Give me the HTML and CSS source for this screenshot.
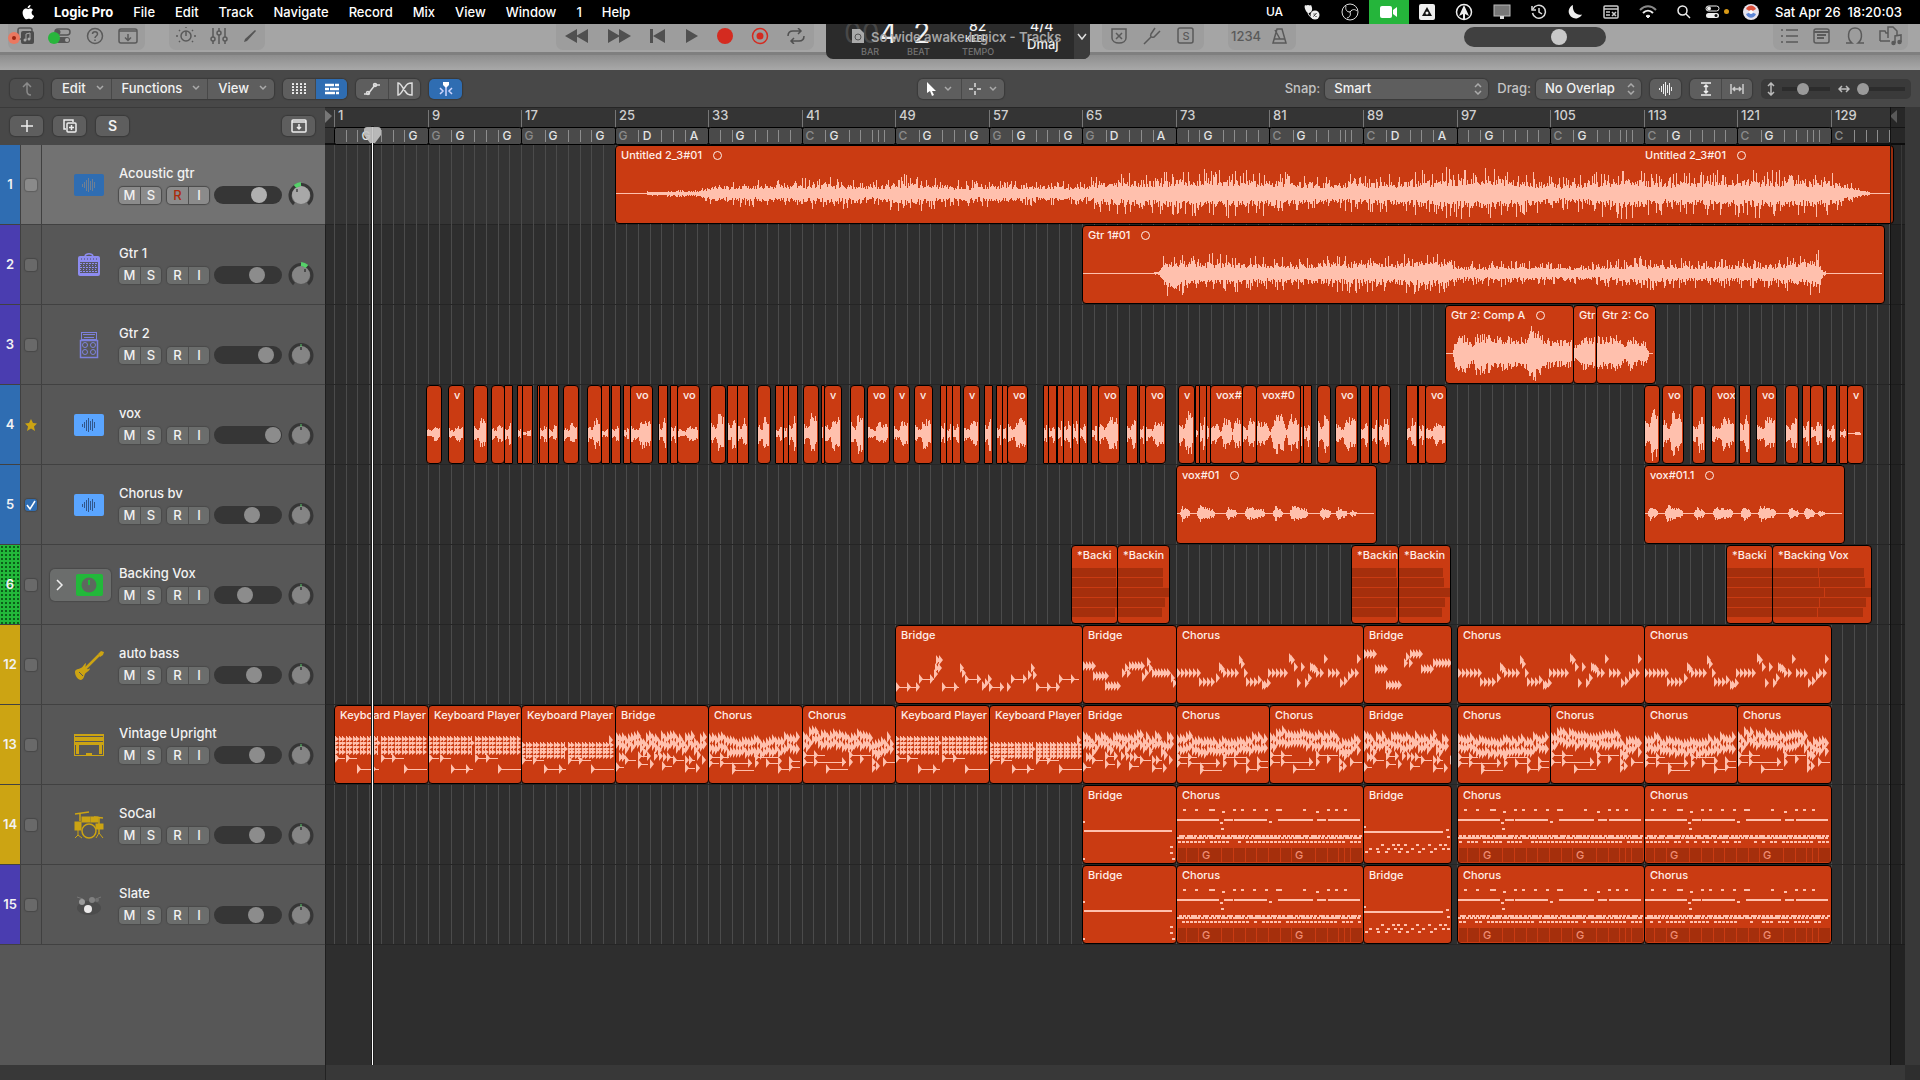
FILE: index.html
```html
<!DOCTYPE html>
<html lang="en">

<head>
    <meta charset="UTF-8">
    <meta name="viewport" content="width=device-width, initial-scale=1.0">
    <title>So wide awake.logicx - Tracks</title>
    <link rel="stylesheet" href="styles.css">
</head>

<body>
    <!-- system menu -->
    <header class="menubar">
        <nav class="menus">
            <svg class="apple" width="14" height="16" viewBox="0 0 14 16"><path d="M11.6 8.4c0-1.6 1.2-2.4 1.4-2.5-.8-1.1-2-1.300-2.400-1.300-1-.1-2 .6-2.500.6S6.800 4.600 6 4.600C4.900 4.600 3.800 5.300 3.200 6.300c-1.300 2.200-.3 5.500.9 7.200.6.900 1.400 1.800 2.300 1.800s1.300-.6 2.400-.6 1.400.6 2.400.6 1.600-.9 2.200-1.700c.4-.6.6-1.100.8-1.700-1.600-.7-2.600-1.800-2.600-3.500zM9.800 3.300c.5-.6.8-1.500.7-2.400-.7 0-1.600.5-2.100 1.100-.5.500-.9 1.400-.8 2.300.9 0 1.700-.4 2.200-1z" fill="#fff"/></svg>
            <b>Logic Pro</b><span>File</span><span>Edit</span><span>Track</span><span>Navigate</span><span>Record</span><span>Mix</span><span>View</span><span>Window</span><span>1</span><span>Help</span>
        </nav>
        <div class="status">
            <span class="lang">UA</span>
            <svg width="18" height="18" viewBox="0 0 18 18"><path d="M2 2c1 1 2 0 3 0s2 1 3 0c1 2 2 5 0 7s-4 1-5-1-2-4-1-6z" fill="#eee"/><path d="M5 10c1 3 3 5 6 5" stroke="#eee" fill="none"/><circle cx="12" cy="12" r="4.500" fill="#eee"/><path d="M10.500 13.500 13.500 10M11 10.500v1M13 13v1" stroke="#222"/></svg>
            <svg width="18" height="18" viewBox="0 0 18 18" fill="none" stroke="#ddd"><circle cx="9" cy="9" r="8"/><path d="M9 9c-3 0-5-2-4-6M9 9c2-3 5-3 7-1M9 9c1 3 0 5-3 6M9 9l2-2"/></svg>
            <span class="cam"><svg width="18" height="12" viewBox="0 0 18 12"><rect width="12" height="12" rx="2" fill="#fff"/><path d="M13 4l4-3v10l-4-3z" fill="#fff"/></svg></span>
            <svg width="16" height="16" viewBox="0 0 16 16"><rect width="16" height="16" rx="2" fill="#eee"/><path d="M8 3 3 12h10z" fill="#111"/><circle cx="8" cy="9" r="1.500" fill="#eee"/></svg>
            <svg width="18" height="18" viewBox="0 0 18 18"><circle cx="9" cy="9" r="7.500" fill="none" stroke="#eee" stroke-width="1.500"/><path d="M9 2l5 11-4-2v5H8v-5l-4 2z" fill="#eee"/></svg>
            <svg width="18" height="16" viewBox="0 0 18 16"><rect x="1" y="1" width="16" height="11" fill="#777" stroke="#bbb"/><path d="M7 12h4v3H7z" fill="#ddd"/></svg>
            <svg width="16" height="16" viewBox="0 0 16 16" fill="none" stroke="#ddd" stroke-width="1.500"><path d="M2 5a6.500 6.500 0 1 1-.5 4"/><path d="M8 4v4l3 2M1 2v4h4"/></svg>
            <svg width="16" height="16" viewBox="0 0 16 16"><path d="M6 1a7 7 0 1 0 9 9.500C9 12 5 7 6 1z" fill="#eee"/></svg>
            <svg width="16" height="14" viewBox="0 0 16 14"><rect x="1" y="1" width="14" height="12" rx="1" fill="none" stroke="#ccc" stroke-width="1.500"/><path d="M1 4h14M3 7h4M3 10h4M9 7l4 4M13 7l-4 4" stroke="#ccc" stroke-width="1.500"/></svg>
            <svg width="18" height="14" viewBox="0 0 18 14" fill="none" stroke="#eee" stroke-width="2"><path d="M1 5c5-5 11-5 16 0" stroke="#888"/><path d="M4 8c3-3 7-3 10 0"/><path d="M7 11l2 2 2-2c-1-1-3-1-4 0z" fill="#eee" stroke-width="1"/></svg>
            <svg width="14" height="14" viewBox="0 0 14 14" fill="none" stroke="#eee" stroke-width="1.500"><circle cx="5.500" cy="5.500" r="4.500"/><path d="M9 9l4 4"/></svg>
            <span class="cc"><svg width="15" height="14" viewBox="0 0 15 14"><rect x="1" y="1" width="13" height="5" rx="2.500" fill="none" stroke="#eee"/><circle cx="4" cy="3.500" r="2" fill="#eee"/><rect x="1" y="8" width="13" height="5" rx="2.500" fill="#eee"/><circle cx="11" cy="10.500" r="1.500" fill="#111"/></svg><i></i></span>
            <svg width="16" height="16" viewBox="0 0 16 16"><circle cx="8" cy="8" r="8" fill="#e7e4ee"/><path d="M3 5c3-5 8-4 10 0l-5 3z" fill="#e0523d"/><path d="M3 10c2 5 8 5 10 0L8 8z" fill="#5c86d8"/><circle cx="8" cy="8" r="2" fill="#fff"/></svg>
            <span class="clock">Sat Apr 26&nbsp; 18:20:03</span>
        </div>
    </header>

    <!-- control bar, half hidden under the menu -->
    <div class="control-bar">
        <div class="cb-side">
            <div class="cb-left">
                <div class="cb-group">
                    <svg width="26" height="20" viewBox="0 0 26 20"><rect x="10" y="2" width="14" height="11" rx="2" fill="none" stroke="#555" stroke-width="1.500"/><rect x="13" y="5" width="13" height="13" rx="2" fill="#4c4c4c"/><path d="M18 14V8l4-1v6" stroke="#a5a5a5" fill="none"/><circle cx="17" cy="14" r="1.500" fill="#a5a5a5"/><circle cx="21" cy="13" r="1.500" fill="#a5a5a5"/><circle cx="6" cy="12" r="6" fill="#ea7860"/><circle cx="6" cy="12" r="2" fill="#9c2410"/></svg>
                    <svg width="24" height="20" viewBox="0 0 24 20"><rect x="7" y="3" width="15" height="6" rx="3" fill="none" stroke="#555" stroke-width="1.500"/><circle cx="10" cy="6" r="2.500" fill="#555"/><rect x="7" y="11" width="15" height="6" rx="3" fill="#555"/><circle cx="19" cy="14" r="2" fill="#a5a5a5"/><circle cx="6" cy="12" r="6" fill="#28b53c"/></svg>
                    <svg width="18" height="18" viewBox="0 0 18 18" fill="none" stroke="#5a5a5a" stroke-width="1.500"><circle cx="9" cy="9" r="7.500"/><path d="M6.500 7c0-3 5-3 5 0 0 2-2.500 2-2.500 4M9 12.500V14"/></svg>
                    <svg width="20" height="18" viewBox="0 0 20 18" fill="none" stroke="#5a5a5a" stroke-width="1.500"><rect x="1" y="2" width="18" height="14" rx="2"/><path d="M1 4h18M10 7v6M7 10.500l3 3 3-3"/></svg>
                </div>
                <div class="cb-group">
                    <svg width="20" height="20" viewBox="0 0 20 20" fill="none" stroke="#5a5a5a" stroke-width="1.500"><circle cx="10" cy="10" r="5"/><path d="M10 5v5M10 1v1M3 4l1 1M17 4l-1 1M0 10h2M18 10h2M3 16l1-1M17 16l-1-1"/></svg>
                    <svg width="18" height="18" viewBox="0 0 18 18" fill="none" stroke="#5a5a5a" stroke-width="1.500"><path d="M3 1v9M3 14v3M9 1v3M9 8v9M15 1v9M15 14v3"/><circle cx="3" cy="12" r="2"/><circle cx="9" cy="6" r="2"/><circle cx="15" cy="12" r="2"/></svg>
                    <svg width="16" height="18" viewBox="0 0 16 18"><path d="M2 15l1-3L13 3l1 1L5 14z" fill="#555"/></svg>
                </div>
            </div>
            <div class="cb-group transport">
                <svg width="24" height="16" viewBox="0 0 24 16"><path d="M12 1v14L0 8zM23 1v14L11 8z" fill="#505050"/></svg>
                <svg width="24" height="16" viewBox="0 0 24 16"><path d="M12 1v14l12-7zM1 1v14l12-7z" fill="#505050"/></svg>
                <svg width="18" height="16" viewBox="0 0 18 16"><path d="M1 1h3v14H1zM16 1v14L4 8z" fill="#505050"/></svg>
                <svg width="14" height="16" viewBox="0 0 14 16"><path d="M1 1v14l12-7z" fill="#505050"/></svg>
                <svg width="16" height="18" viewBox="0 0 16 18"><circle cx="8" cy="9" r="8" fill="#d42b20"/></svg>
                <svg width="18" height="18" viewBox="0 0 18 18"><circle cx="9" cy="9" r="7.500" fill="none" stroke="#d42b20" stroke-width="1.500"/><circle cx="9" cy="9" r="3.500" fill="#d42b20"/></svg>
                <svg width="18" height="16" viewBox="0 0 18 16" fill="none" stroke="#505050" stroke-width="1.500"><path d="M1 8c0-4 2-5 5-5h8M11 0l3 3-3 3M17 8c0 4-2 5-5 5H4M7 10l-3 3 3 3"/></svg>
            </div>
        </div>
        <div class="lcd">
            <span class="lcd-num"><i>00</i>4&nbsp; 2</span>
            <span class="lcd-bpm">82</span>
            <span class="lcd-keep">KEEP</span>
            <span class="lcd-sig">4/4</span>
            <span class="lcd-key">Dmaj</span>
            <span class="lcd-title"><svg width="12" height="14" viewBox="0 0 12 14"><path d="M0 0h8l4 4v10H0z" fill="#aaa"/><circle cx="6" cy="8" r="3" fill="none" stroke="#555"/></svg>So wide awake.logicx - Tracks</span>
            <span class="lcd-cap cap-bar">BAR</span><span class="lcd-cap cap-beat">BEAT</span><span class="lcd-cap cap-tempo">TEMPO</span>
            <span class="lcd-drop"><svg width="12" height="8" viewBox="0 0 12 8"><path d="M2 1l4 5 4-5" stroke="#ddd" stroke-width="1.500" fill="none"/></svg></span>
        </div>
        <div class="cb-side">
            <div class="cb-left">
                <div class="cb-group modes">
                    <svg width="16" height="18" viewBox="0 0 16 18" fill="none" stroke="#5a5a5a" stroke-width="1.500"><path d="M1 2h14v9c0 3-3 5-7 5s-7-2-7-5z"/><path d="M5 6l6 6M11 6l-6 6"/></svg>
                    <svg width="18" height="18" viewBox="0 0 18 18" fill="none" stroke="#5a5a5a" stroke-width="1.500"><path d="M1 17l7-7M12 1 8 7c-1 2 0 4 3 3l6-6"/></svg>
                    <svg width="18" height="18" viewBox="0 0 18 18"><rect x="1" y="1" width="15" height="15" rx="2" fill="none" stroke="#5a5a5a" stroke-width="1.500"/><text x="9" y="13" text-anchor="middle" class="svg-s">S</text></svg>
                </div>
                <div class="cb-group count">
                    <span>1234</span>
                    <svg width="18" height="18" viewBox="0 0 18 18" fill="none" stroke="#5a5a5a" stroke-width="1.500"><path d="M6 2h5l4 14H2zM3 12h11M9 12 4 3"/></svg>
                </div>
            </div>
            <input class="master" type="range" min="0" max="100" value="70" aria-label="Master volume">
            <div class="cb-group browsers">
                <svg width="18" height="16" viewBox="0 0 18 16" stroke="#5a5a5a" stroke-width="1.500"><path d="M0 2h2M5 2h12M0 8h2M5 8h12M0 14h2M5 14h12"/></svg>
                <svg width="18" height="18" viewBox="0 0 18 18" fill="none" stroke="#5a5a5a" stroke-width="1.500"><rect x="1" y="2" width="15" height="14" rx="2"/><path d="M1 5h15M4 8h9M4 11h7" stroke-width="2"/></svg>
                <svg width="20" height="18" viewBox="0 0 20 18" fill="none" stroke="#5a5a5a" stroke-width="1.500"><path d="M1 16h6c-5-4-5-15 3-15s8 11 3 15h6"/></svg>
                <svg width="24" height="20" viewBox="0 0 24 20" fill="none" stroke="#5a5a5a" stroke-width="1.500"><path d="M1 15V5h5l1 2h2M1 15h10M9 12V1h5l4 4v4"/><path d="M16 17v-7l6-1v7"/><circle cx="14.500" cy="17" r="1.500" fill="#5a5a5a"/><circle cx="20.500" cy="16" r="1.500" fill="#5a5a5a"/></svg>
            </div>
        </div>
    </div>
    <div class="window-edge"></div>

    <!-- tracks area menu bar -->
    <div class="area-bar">
        <div class="area-left">
            <button class="btn dim" aria-label="Up"><svg width="12" height="14" viewBox="0 0 12 14" fill="none" stroke="#8b8b8b" stroke-width="1.500"><path d="M10 13c-3 0-4-1-4-4V1M2 5l4-4 4 4"/></svg></button>
            <div class="seg">
                <button class="menu">Edit<svg width="8" height="6" viewBox="0 0 8 6"><path d="M1 1l3 3 3-3" fill="none" stroke="#aaa" stroke-width="1.500"/></svg></button>
                <button class="menu">Functions<svg width="8" height="6" viewBox="0 0 8 6"><path d="M1 1l3 3 3-3" fill="none" stroke="#aaa" stroke-width="1.500"/></svg></button>
                <button class="menu">View<svg width="8" height="6" viewBox="0 0 8 6"><path d="M1 1l3 3 3-3" fill="none" stroke="#aaa" stroke-width="1.500"/></svg></button>
            </div>
            <div class="seg icons">
                <button aria-label="Live loops grid"><svg width="14" height="14" viewBox="0 0 14 14" shape-rendering="crispEdges"><path d="M0 2h14M0 5h14M0 8h14M0 11h14" transform="translate(0 .5)" stroke="#eee" stroke-width="1" stroke-dasharray="2 2"/><path d="M0 1.500h14M0 4.500h14M0 7.500h14M0 10.500h14" stroke="#ddd" stroke-dasharray="2 2"/></svg></button>
                <button class="on" aria-label="Tracks view"><svg width="16" height="12" viewBox="0 0 16 12"><path d="M1 2h9M11 2h4M1 6h4M6 6h9M1 10h10M12 10h3" stroke="#fff" stroke-width="2.500"/></svg></button>
            </div>
            <div class="seg icons">
                <button aria-label="Automation"><svg width="18" height="14" viewBox="0 0 18 14" fill="none" stroke="#ddd" stroke-width="1.500"><path d="M1 12h4L12 3h5"/><circle cx="5" cy="11" r="1.500"/><circle cx="12" cy="3" r="1.500"/></svg></button>
                <button aria-label="Flex"><svg width="16" height="14" viewBox="0 0 16 14" fill="none" stroke="#ddd" stroke-width="1.500"><path d="M1 1v12c3 0 4-4 7-8 2-3 3-4 7-4v12c-4 0-5-1-7-4C5 5 4 1 1 1z"/></svg></button>
            </div>
            <button class="btn on" aria-label="Catch playhead"><svg width="16" height="16" viewBox="0 0 16 16"><path d="M5 1h6v3L8 7 5 4z" fill="#fff"/><path d="M8 6v9M2 7l3 3-3 3M14 7l-3 3 3 3" stroke="#cfd6ff" fill="none" stroke-width="1.500"/></svg></button>
        </div>
        <div class="seg tools">
            <button aria-label="Pointer tool"><svg width="10" height="14" viewBox="0 0 10 14"><path d="M1 0v11l3-2 2 5 2-1-2-4h4z" fill="#fff"/></svg><svg width="8" height="6" viewBox="0 0 8 6"><path d="M1 1l3 3 3-3" fill="none" stroke="#aaa" stroke-width="1.500"/></svg></button>
            <button aria-label="Marquee tool"><svg width="12" height="12" viewBox="0 0 12 12"><path d="M6 0v4M6 8v4M0 6h4M8 6h4" stroke="#ddd" stroke-width="1.500"/></svg><svg width="8" height="6" viewBox="0 0 8 6"><path d="M1 1l3 3 3-3" fill="none" stroke="#aaa" stroke-width="1.500"/></svg></button>
        </div>
        <div class="area-right">
            <label for="snap">Snap:</label>
            <span class="pick snap"><select id="snap"><option>Smart</option><option>Bar</option><option>Beat</option></select><svg width="8" height="12" viewBox="0 0 8 12"><path d="M1 4l3-3 3 3M1 8l3 3 3-3" fill="none" stroke="#aaa" stroke-width="1.500"/></svg></span>
            <label for="drag">Drag:</label>
            <span class="pick drag"><select id="drag"><option>No Overlap</option><option>Overlap</option></select><svg width="8" height="12" viewBox="0 0 8 12"><path d="M1 4l3-3 3 3M1 8l3 3 3-3" fill="none" stroke="#aaa" stroke-width="1.500"/></svg></span>
            <button class="btn wave-btn" aria-label="Waveform zoom"><svg width="13" height="14" viewBox="0 0 13 14" shape-rendering="crispEdges"><path d="M.5 6v2M2.500 4v6M4.500 2v10M6.500 0v14M8.500 3v8M10.500 1v12M12.500 5v4" stroke="#eee"/></svg></button>
            <div class="seg zoomers">
                <button aria-label="Vertical auto zoom"><svg width="12" height="14" viewBox="0 0 12 14" fill="none" stroke="#eee" stroke-width="1.500"><path d="M1 1h10M1 13h10M6 4v6M4 5l2-2 2 2M4 9l2 2 2-2"/></svg></button>
                <button aria-label="Horizontal auto zoom"><svg width="14" height="12" viewBox="0 0 14 12" fill="none" stroke="#ccc" stroke-width="1.500"><path d="M1 1v10M13 1v10M3 6h8M5 4 3 6l2 2M9 4l2 2-2 2"/></svg></button>
            </div>
            <div class="zoom">
                <svg width="8" height="14" viewBox="0 0 8 14" fill="none" stroke="#bbb" stroke-width="1.500"><path d="M4 2v10M1 4l3-3 3 3M1 10l3 3 3-3"/></svg>
                <input type="range" min="0" max="100" value="40" aria-label="Vertical zoom">
                <svg width="12" height="8" viewBox="0 0 12 8" fill="none" stroke="#bbb" stroke-width="1.500"><path d="M2 4h8M4 1 1 4l3 3M8 1l3 3-3 3"/></svg>
                <input type="range" min="0" max="100" value="0" aria-label="Horizontal zoom">
            </div>
        </div>
    </div>

    <main class="workspace">
        <aside class="headers">
            <div class="headers-top">
                <button class="btn" aria-label="New track"><svg width="12" height="12" viewBox="0 0 12 12"><path d="M6 0v12M0 6h12" stroke="#eee" stroke-width="1.500"/></svg></button>
                <button class="btn" aria-label="Duplicate track"><svg width="14" height="14" viewBox="0 0 14 14" fill="none" stroke="#eee" stroke-width="1.500"><path d="M3 10H1V1h9v2"/><rect x="4" y="4" width="9" height="9" rx="1"/><path d="M8.500 6v5M6 8.500h5"/></svg></button>
                <button class="btn solo">S</button>
                <button class="btn last" aria-label="Header options"><svg width="16" height="14" viewBox="0 0 16 14" fill="none" stroke="#eee" stroke-width="1.500"><rect x="1" y="1" width="14" height="12" rx="1"/><path d="M1 3h14M8 5v5M6 8l2 2 2-2"/></svg></button>
            </div>
            <div id="tracks"></div>
        </aside>
        <section class="timeline">
            <div class="ruler" id="ruler"></div>
            <div class="lanes" id="lanes"></div>
            <div class="after-end"></div>
            <div class="playhead"><svg width="17" height="17" viewBox="0 0 17 17"><path d="M0 3c0-2 1-3 3-3h11c2 0 3 1 3 3v5l-6 8H6L0 8z" fill="#c4c4c4"/></svg></div>
        </section>
        <div class="vscroll"></div>
    </main>
    <div class="hscroll"><i></i></div>
    <script src="script.js"></script>
</body>

</html>
```

FILE: styles.css
```css
* {
    box-sizing: border-box;
    margin: 0;
    padding: 0;
}

body {
    height: 100vh;
    display: flex;
    flex-direction: column;
    overflow: hidden;
    background-color: #2e2e2e;
    color: #f2f2f2;
    font: 500 13px/16px Inter, "Liberation Sans", sans-serif;
}

svg {
    display: block;
    flex: none;
}

button,
select {
    border: 0;
    color: inherit;
    font: inherit;
    background: none;
}

input[type="range"] {
    appearance: none;
    display: block;
    flex: none;
}

/* menu bar */
.menubar {
    height: 24px;
    flex: none;
    display: flex;
    justify-content: space-between;
    align-items: center;
    padding: 0 18px 1px 20px;
    background-color: #000;
    color: #fff;
}

.menus {
    display: flex;
    align-items: center;
    gap: 20px;
}

.status {
    display: flex;
    align-items: center;
    gap: 20px;
}

.lang {
    font-size: 12px;
}

.cam {
    width: 40px;
    height: 24px;
    margin: 0 -10px;
    display: flex;
    align-items: center;
    justify-content: center;
    background-color: #25b53b;
}

.cc {
    display: flex;
    align-items: center;
    gap: 4px;
    margin: 0 -6px;
}

.cc i {
    width: 5px;
    height: 5px;
    border-radius: 50%;
    background-color: #d99a17;
}

.clock {
    margin-left: -4px;
    white-space: nowrap;
}

/* control bar */
.control-bar {
    height: 28px;
    flex: none;
    display: grid;
    grid-template-columns: 1fr auto 1fr;
    gap: 12px;
    padding: 0 12px 0 8px;
    background-color: #a5a5a5;
}

.cb-side {
    display: flex;
    justify-content: space-between;
}

.cb-left {
    display: flex;
    gap: 24px;
}

.cb-group {
    height: 26px;
    display: flex;
    align-items: center;
    gap: 14px;
    padding: 0 7px 3px;
    border-radius: 0 0 7px 7px;
    background-color: #9d9d9d;
}

.cb-group:first-child {
    padding-left: 0;
}

.cb-group.transport {
    gap: 18px;
    padding: 0 9px 3px;
}

.cb-group.modes {
    gap: 16px;
    padding: 0 9px 3px;
}

.cb-group.count {
    gap: 10px;
    padding: 0 7px 3px 3px;
    color: #5a5a5a;
}

.cb-group.browsers {
    gap: 14px;
    padding: 0 5px 3px 8px;
}

.svg-s {
    font-size: 11px;
    fill: #5a5a5a;
}

.lcd {
    width: 264px;
    height: 35px;
    position: relative;
    z-index: 2;
    overflow: hidden;
    border-radius: 0 0 7px 7px;
    background-color: #2b2b2b;
    white-space: nowrap;
}

.lcd span {
    position: absolute;
}

.lcd-num {
    left: 18px;
    top: -8px;
    font-size: 28px;
    line-height: 34px;
    font-weight: 400;
}

.lcd-num i {
    color: #484848;
    font-style: normal;
}

.lcd-bpm,
.lcd-sig {
    top: -6px;
    left: 143px;
    font-size: 14px;
}

.lcd-sig {
    left: 204px;
}

.lcd-keep {
    left: 139px;
    top: 7px;
    font-size: 9px;
}

.lcd-key {
    left: 201px;
    top: 12px;
}

.lcd-title {
    left: 26px;
    top: 5px;
    display: flex;
    gap: 7px;
    color: #a5a5a5;
    font-weight: 600;
}

.lcd-cap {
    top: 20px;
    color: #747474;
    font-size: 9px;
}

.cap-bar {
    left: 35px;
}

.cap-beat {
    left: 81px;
}

.cap-tempo {
    left: 136px;
}

.lcd-drop {
    top: 0;
    right: 0;
    width: 16px;
    height: 35px;
    padding: 9px 2px;
    background-color: #3b3b3b;
}

.master {
    width: 142px;
    height: 20px;
    margin-top: 3px;
    padding: 0 2px;
    border-radius: 10px;
    background-color: #404040;
}

.master::-webkit-slider-thumb {
    appearance: none;
    width: 16px;
    height: 16px;
    border-radius: 50%;
    background-color: #c9c9c9;
}

.window-edge {
    height: 18px;
    flex: none;
    border-top: 3px solid #7f7f7f;
    background: linear-gradient(#8d8d8d, #9b9b9b 50%, #a8a8a8);
}

/* area bar */
.area-bar {
    height: 37px;
    flex: none;
    display: grid;
    grid-template-columns: 1fr auto 1fr;
    align-items: center;
    padding: 0 9px 0 10px;
    background-color: #484848;
}

.area-left,
.area-right {
    display: flex;
    align-items: center;
    gap: 9px;
}

.area-right {
    justify-content: flex-end;
}

.btn,
.seg {
    height: 20px;
    display: flex;
    align-items: center;
    justify-content: center;
    border-radius: 5px;
    background-color: #5e5e5e;
    box-shadow: 0 0 1px 1px #3a3a3a;
}

.btn {
    width: 33px;
}

.btn.dim {
    background-color: #4e4e4e;
}

.btn.on,
.seg .on {
    background-color: #2f6db2;
}

.seg {
    overflow: hidden;
}

.seg button {
    height: 20px;
    display: flex;
    align-items: center;
    justify-content: center;
    gap: 8px;
}

.seg button + button {
    border-left: 1px solid #484848;
}

.seg .menu {
    gap: 10px;
    padding: 0 7px 2px 10px;
}

.icons button {
    width: 32px;
}

.zoomers button {
    width: 31px;
}

.tools button {
    width: 43px;
}

.area-right label {
    margin-right: -4px;
    padding-bottom: 2px;
    color: #c4c4c4;
}

.pick {
    position: relative;
}

.pick select {
    appearance: none;
    width: 163px;
    height: 20px;
    display: block;
    padding: 0 9px 2px;
    border-radius: 5px;
    background-color: #5e5e5e;
    box-shadow: 0 0 1px 1px #3a3a3a;
}

.pick.drag select {
    width: 105px;
}

.pick svg {
    position: absolute;
    right: 6px;
    top: 4px;
    pointer-events: none;
}

.zoom {
    width: 150px;
    height: 20px;
    display: flex;
    align-items: center;
    justify-content: space-between;
    padding: 0 6px;
    border-radius: 5px;
    background-color: #3a3a3a;
}

.zoom input {
    width: 48px;
    height: 12px;
    background: linear-gradient(#2c2c2c, #2c2c2c) center / 100% 4px no-repeat;
}

.zoom input::-webkit-slider-thumb {
    appearance: none;
    width: 12px;
    height: 12px;
    border-radius: 50%;
    background-color: #9a9a9a;
}

.wave-btn {
    width: 31px;
}

/* track headers */
.workspace {
    flex: 1;
    min-height: 0;
    display: flex;
}

.headers {
    width: 325px;
    flex: none;
    background-color: #575757;
}

.headers-top {
    height: 38px;
    display: flex;
    align-items: center;
    gap: 10px;
    padding: 0 10px 1px;
    border-top: 1px solid #3a3a3a;
    background-color: #484848;
}

.last {
    margin-left: auto;
}

.solo {
    font-size: 14px;
    font-weight: 600;
}

.track {
    height: 80px;
    display: flex;
    border-bottom: 1px solid #414141;
}

.track.selected {
    background-color: #727272;
}

.track-num {
    width: 20px;
    display: flex;
    align-items: center;
    justify-content: center;
    padding-bottom: 2px;
    font-weight: 600;
}

.blue {
    background-color: #2f6db2;
}

.purple {
    background-color: #4a3db0;
}

.yellow {
    background-color: #cca413;
}

.green {
    background: radial-gradient(#0c5e19 1px, transparent 1px) 0 0 / 4px 4px #22b83a;
}

.track-check {
    width: 22px;
    display: flex;
    align-items: center;
    justify-content: center;
    border: 1px solid #404040;
    border-width: 0 1px;
}

.track-check input {
    appearance: none;
    display: block;
    width: 12px;
    height: 12px;
    border-radius: 3px;
    background-color: #696969;
    box-shadow: 0 0 1px 1px #484848;
}

.selected .track-check input {
    background-color: #8a8a8a;
    box-shadow: 0 0 1px 1px #5e5e5e;
}

.track-check input:checked {
    background: linear-gradient(#2f6db2, #2f6db2);
}

.track-check label {
    position: relative;
}

.track-check label svg {
    position: absolute;
    left: 0;
    top: 0;
}

.track-icon {
    width: 61px;
    height: 32px;
    align-self: center;
    margin: 0 8px;
    display: flex;
    align-items: center;
    justify-content: flex-end;
    padding-right: 7px;
}

.track-icon.stack {
    justify-content: space-between;
    padding-left: 6px;
    border-radius: 5px;
    background-color: #6b6d6c;
    box-shadow: 0 0 1px 1px #4a4a4a;
}

.track-main {
    padding-top: 20px;
}

.track-name {
    font-weight: 500;
}

.track-controls {
    display: flex;
    align-items: center;
    height: 28px;
    gap: 6px;
}

.pair {
    display: flex;
    border-radius: 4px;
    overflow: hidden;
    background-color: #6b6d6c;
    box-shadow: 0 0 1px 1px #4a4a4a;
}

.selected .pair {
    background-color: #8b8b8b;
}

.pair button {
    width: 21px;
    height: 17px;
    line-height: 17px;
}

.pair button + button {
    border-left: 1px solid #505050;
}

.selected .pair .rec {
    color: #ab2c0b;
}

.vol {
    width: 68px;
    height: 18px;
    margin-left: -1px;
    padding: 0 1px;
    border-radius: 9px;
    background-color: #363636;
}

.vol::-webkit-slider-thumb {
    appearance: none;
    width: 16px;
    height: 16px;
    border-radius: 50%;
    background-color: #8c8c8c;
}

.selected .vol::-webkit-slider-thumb {
    background-color: #b0b0b0;
}

/* timeline */
.timeline {
    flex: 1;
    min-width: 0;
    position: relative;
    overflow: hidden;
    background-color: #2e2e2e;
    box-shadow: inset 1px 0 #1e1e1e;
}

.ruler {
    height: 38px;
    position: relative;
    background: linear-gradient(#343434 19px, #1b1b1b 19px, #1b1b1b 20px, #343434 20px);
    border-top: 1px solid #262626;
    border-bottom: 2px solid #111;
    color: #cfcfcf;
}

.ruler svg {
    position: absolute;
    left: 0;
    top: 0;
}

.ruler span {
    position: absolute;
    top: -1px;
}

.ruler .chord {
    top: 20px;
    width: 12px;
    text-align: center;
    font-size: 12px;
    color: #e4e4e4;
    background-color: #4a4a4a;
}

.ruler .chord.dim {
    color: #8b8b8b;
    background: none;
}

.lanes {
    position: relative;
}

.grid {
    position: absolute;
    left: 0;
    top: 0;
}

.lane {
    height: 80px;
    position: relative;
    border-bottom: 1px solid #252525;
}

.lane.selected {
    background-color: #343434;
}

.region {
    position: absolute;
    top: 0;
    height: 79px;
    overflow: hidden;
    border: 1px solid #000;
    border-radius: 4px;
    background-color: #ca3b12;
}

.region.thin {
    border-radius: 1px;
}

.region > svg {
    position: absolute;
    left: 0;
    top: 0;
}

.region-name {
    position: absolute;
    left: 5px;
    top: 1px;
    display: flex;
    align-items: center;
    gap: 11px;
    font-size: 11px;
    white-space: nowrap;
    color: #ffefe9;
}

.region-name i {
    width: 9px;
    height: 9px;
    border: 1px solid #ffefe9;
    border-radius: 50%;
}

.region-chord {
    position: absolute;
    top: 61px;
    font-size: 11px;
    color: #f08d73;
}

.after-end {
    position: absolute;
    top: 0;
    right: 0;
    bottom: 0;
    width: 15px;
    border-left: 1px solid #111;
    background-color: rgba(0, 0, 0, .25);
}

.playhead {
    position: absolute;
    left: 47px;
    top: 20px;
    bottom: 0;
    width: 1px;
    background-color: #fff;
    box-shadow: 0 0 0 1px #1b1b1b;
}

.playhead svg {
    position: relative;
    left: -8px;
    opacity: .9;
}

.vscroll {
    width: 15px;
    flex: none;
    background-color: #383838;
}

.hscroll {
    height: 15px;
    flex: none;
    display: flex;
    justify-content: flex-end;
    background: linear-gradient(90deg, #383838 325px, #222 325px, #222 326px, #383838 326px);
}

.hscroll i {
    width: 15px;
    background-color: #2e2e2e;
}
```

FILE: script.js
```js
var FG = '#ffc0ad';
var LANE_H = 80;

// pixel position of a bar line inside the timeline
function bar(n) {
    return Math.floor(9.6 + (n - 1) * 11.692);
}

var seed = 7;
function rnd() {
    seed = (seed * 16807) % 2147483647;
    return seed / 2147483647;
}

/* ---------- audio ---------- */

function level(env, x) {
    for (var i = 1; i < env.length; i++) {
        if (x <= env[i][0]) {
            var a = env[i - 1], b = env[i];
            return a[1] + (b[1] - a[1]) * (x - a[0]) / (b[0] - a[0] || 1);
        }
    }
    return 0;
}

// share of the envelope that one column fills
function column(spiky) {
    if (!spiky) return 0.45 + rnd() * 0.5;
    return rnd() < 0.25 ? 0.5 + rnd() * 0.5 : 0.25 + rnd() * 0.3;
}

// env is a list of [x, amplitude]
function wave(w, env, spiky) {
    var d = 'M0 47.5H' + (w - 4);
    for (var x = 0; x < w - 3; x++) {
        var a = level(env, x);
        if (a < 1) continue;
        d += 'M' + (x + .5) + ' ' + (47 - Math.round(a * column(spiky))) + 'V' + (48 + Math.round(a * column(spiky)));
    }
    return '<path d="' + d + '" stroke="' + FG + '" fill="none"/>';
}

// bumps is a list of [from, to, amplitude]
function bumps(w, list) {
    var env = [[0, 0]];
    list.forEach(function (b) {
        env.push([b[0], 0], [b[0] + 3, b[2]], [(b[0] + b[1]) / 2, b[2] * .7], [b[1] - 2, b[2] * .5], [b[1], 0]);
    });
    return wave(w, env);
}

/* ---------- midi ---------- */

function note(x, y, len, s) {
    s = s || 5;
    var d = 'M' + x + ' ' + (y - s) + 'l4 ' + s + 'l-4 ' + s + 'z';
    if (len) d += 'M' + x + ' ' + y + 'h' + len + 'v1h-' + len + 'z';
    return d;
}

function notes(list) {
    return list.map(function (n) { return note(n[0], n[1], n[2]); }).join('');
}

// list of [from, to, y, step]
function runs(list) {
    var d = '';
    list.forEach(function (r) {
        for (var x = r[0]; x <= r[1]; x += r[3] || 3) d += note(x, r[2]);
    });
    return d;
}

function fill(d) {
    return '<path d="' + d + '" fill="' + FG + '"/>';
}

function rects(list, color) {
    return '<path d="' + list.map(function (r) {
        return 'M' + r[0] + ' ' + r[1] + 'h' + r[2] + 'v' + (r[3] || 2) + 'h-' + r[2] + 'z';
    }).join('') + '" fill="' + (color || FG) + '"/>';
}

// chord band of the piano parts, curve gives the height at each column
function band(w, rows, curve) {
    var d = '';
    var n = Math.floor((w - 3) / 3);
    for (var i = 0; i < n; i++) {
        var c = curve[Math.floor(i * curve.length / n)];
        rows.forEach(function (y) {
            d += note(i * 3, y + c + Math.round(rnd() * 4 - 2), 0, 6);
        });
    }
    return d;
}

// even repeated chords, the third quarter starts a little lower
function pulse(rows) {
    var d = '';
    for (var i = 0; i < 26; i++) {
        rows.forEach(function (y, k) {
            if (i === 12 && k !== 1) return;
            d += note(Math.round(i * 3.5), y, 0, 3);
        });
        d += 'M' + Math.round(i * 3.5) + ' ' + (rows[0] - 3) + 'h1v' + (rows[3] - rows[0] + 6) + 'h-1z';
    }
    return d;
}

var draw = {
    bassLong: function () {
        return fill(notes([[0, 61, 11], [11, 61, 9], [20, 61, 3], [23, 53, 11], [34, 53, 4], [38, 48], [39, 42], [42, 42], [40, 34], [43, 34], [46, 61, 14], [58, 61, 5], [64, 42], [66, 47], [69, 53, 12], [81, 53, 4], [86, 60], [89, 57], [92, 53], [93, 61, 11], [104, 61, 4], [111, 61, 3], [115, 53, 12], [127, 53], [132, 49], [135, 42], [137, 49], [140, 61, 12], [151, 61, 9], [160, 61, 3], [163, 53, 12], [175, 53, 8]]));
    },
    bassBridge: function () {
        return fill(runs([[0, 10, 40], [10, 22, 50], [22, 36, 60], [46, 58, 40], [69, 86, 47]]) + notes([[39, 47], [42, 42], [44, 47], [59, 51], [62, 47], [64, 36], [66, 42], [88, 52], [90, 57]]));
    },
    bassBridge2: function () {
        return fill(runs([[0, 10, 28], [11, 21, 43], [22, 36, 59], [46, 56, 28], [57, 68, 43], [69, 84, 37]]) + notes([[40, 37], [42, 31], [45, 37]]));
    },
    bassChorus: function () {
        return fill(runs([[0, 21, 47, 4], [22, 37, 56, 4], [46, 59, 47, 4], [69, 78, 56, 4], [91, 110, 47, 4], [151, 162, 47, 4], [174, 181, 47, 4]]) + notes([[39, 52], [42, 41], [44, 43], [62, 34], [64, 38], [67, 47], [81, 54], [85, 59], [87, 59], [90, 57], [112, 32], [114, 34], [117, 41], [124, 41], [120, 57], [128, 57], [131, 52], [133, 41], [135, 42], [137, 43], [139, 47], [143, 47], [147, 33], [163, 57], [167, 55], [171, 50], [180, 33]]));
    },
    keyA: function () {
        return fill(pulse([33, 37, 41, 46]) + notes([[0, 52, 10], [11, 52, 11], [46, 52, 11], [57, 52, 12], [22, 63, 22], [37, 63], [69, 63, 23]]));
    },
    keyB: function () {
        return fill(pulse([39, 43, 46, 50]) + notes([[0, 54, 10], [11, 54, 11], [46, 54, 11], [57, 54, 12], [22, 63, 22], [37, 63], [69, 63, 23], [87, 34]]));
    },
    keyBridge: function (w) {
        return fill(band(w, [32, 39], [-1, 2, 5, 1, 0, -1, 3, 5, 0, -1, 1, 3, 0, 2, 1, -2, 3, 0, 5, 2, -1, 6, 8, 0, 1]) + notes([[0, 61, 8], [3, 51], [6, 51], [9, 54, 11], [22, 50, 9], [31, 50], [22, 58, 10], [34, 58], [38, 50], [43, 50], [47, 51], [51, 51, 6], [46, 60, 10], [57, 54, 11], [69, 54], [73, 54, 6], [69, 62, 10], [80, 62], [86, 54]]));
    },
    chorusA: function (w) {
        return fill(band(w, [34, 43], [-1, -1, -2, 1, 2, 2, 3, 3, 3, 4, 3, 2, 4, 3, 2, 1, 2, 3, -2, -1, 0, -2]) + notes([[0, 51, 20], [0, 57, 10], [11, 51], [11, 57, 32], [23, 64, 22], [23, 61], [39, 57], [46, 51, 23], [46, 57], [57, 57, 13], [69, 55], [69, 63, 11], [80, 61, 11], [80, 55, 11]]));
    },
    chorusB: function (w) {
        return fill(band(w, [29, 37], [3, -1, -2, 2, 0, 1, 0, 0, 1, 2, 4, 2, 1, 2, 1, 3, 10, 8, 7, 4, 7]) + notes([[0, 49, 22], [0, 56, 10], [11, 49], [11, 56, 32], [23, 63, 22], [39, 56], [46, 49, 22], [46, 56], [57, 53], [69, 56], [69, 62], [73, 60], [74, 50], [80, 56, 12]]));
    },
    drumBridge: function () {
        return rects([[0, 35, 2], [0, 72, 2], [1, 44, 88], [87, 60, 3], [87, 66, 3], [89, 72, 3]]);
    },
    drumBridge2: function () {
        var list = [[0, 40, 2], [0, 45, 79], [82, 43, 3], [83, 50, 3], [83, 62, 3]];
        [17, 28, 33, 40, 52, 64, 75, 80].forEach(function (x) { list.push([x, 58, 3]); });
        [5, 12, 23, 30, 36, 47, 58, 70, 78].forEach(function (x) { list.push([x, 62, 3]); });
        [1, 13, 21, 34, 42, 54, 66].forEach(function (x) { list.push([x, 65, 3]); });
        return rects(list);
    },
    drumChorus: function (w) {
        var list = [[32, 23, 6], [99, 23, 6], [45, 25, 3], [139, 25, 3], [0, 33, 42], [47, 33, 9], [57, 33, 33], [101, 33, 35], [140, 33, 9], [151, 33, 32], [43, 36, 3], [92, 35, 3], [44, 42, 3]];
        [6, 18, 56, 64, 76, 88, 126, 150, 158, 167].forEach(function (x) { list.push([x, 23, 3]); });
        for (var x = 0; x < 183; x += 4) {
            list.push([x, 51, rnd() < .5 ? 4 : 3]);
            list.push([x + (rnd() < .5 ? 1 : 2), 49, 3]);
            if (rnd() < .75) list.push([x + 1, 55, 3]);
        }
        var s = rects([[1, 62, w - 4, 14]], '#a52f0c');
        s += rects([9, 21, 44, 56, 68, 79, 91, 103, 114, 138, 150, 161, 167, 173].map(function (x) { return [x, 62, 1, 14]; }), '#ca3b12');
        return s + rects(list);
    },
    takes: function (w, r) {
        return rects(r.takes.map(function (t, i) { return [0, 22 + i * 10, t, 9]; }), '#a52f0c') +
            (r.cuts ? rects(r.cuts.map(function (c, i) { return [c, 22 + i * 10, 1, 9]; }), '#ca3b12') : '');
    },
    audio: function (w, r) { return wave(w, r.env, r.spiky); },
    bumps: function (w, r) { return bumps(w, r.list); }
};

function midi(from, to, name, kind) {
    return { x: bar(from), end: to > 200 ? to : bar(to), name: name, kind: kind };
}

var bv = [[2, 13, 8], [19, 38, 9], [48, 60, 7], [67, 88, 8], [95, 106, 9], [112, 131, 9], [142, 154, 7], [158, 170, 7], [172, 180, 4]];

// [start, end, amplitude, label]
var vox = [[101, 116, 7], [123, 139, 8, 'v'], [148, 162, 15], [166, 179, 9], [179, 187, 10], [192, 197, 6], [197, 207, 3], [212, 214, 6], [214, 223, 8], [223, 233, 7], [238, 253, 10], [262, 276, 14], [276, 284, 4], [286, 295, 8], [298, 305, 6], [305, 327, 14, 'vo'], [333, 342, 14], [345, 352, 10], [352, 374, 7, 'vo'], [385, 400, 18], [402, 412, 18], [412, 423, 14], [432, 445, 16], [450, 458, 6], [458, 463, 8], [463, 472, 16], [478, 493, 18], [496, 499, 10], [499, 516, 17, 'v'], [525, 539, 18], [542, 564, 10, 'vo'], [568, 584, 12, 'v'], [589, 607, 14, 'v'], [615, 621, 12], [621, 627, 10], [627, 635, 10], [638, 654, 12, 'v'], [659, 667, 16], [671, 677, 10], [677, 682, 10], [682, 702, 15, 'vo'], [718, 723, 10], [723, 731, 8], [732, 738, 12], [738, 747, 14], [747, 754, 14], [754, 762, 10], [766, 773, 7], [773, 794, 16, 'vo'], [801, 812, 14], [814, 820, 9], [820, 840, 12, 'vo'], [853, 869, 21, 'v'], [870, 874, 6], [874, 881, 17], [881, 885, 14], [885, 917, 16, 'vox#'], [917, 931, 14], [931, 975, 19, 'vox#0'], [975, 978, 20], [978, 986, 12], [992, 1005, 19], [1010, 1032, 16, 'vo'], [1035, 1044, 12], [1046, 1053, 14], [1053, 1065, 15], [1081, 1092, 13], [1093, 1100, 11], [1100, 1121, 11, 'vo'], [1319, 1334, 24], [1337, 1358, 22, 'vo'], [1367, 1380, 17], [1386, 1410, 15, 'vox'], [1414, 1425, 19], [1431, 1451, 16, 'vo'], [1460, 1473, 15], [1477, 1485, 12], [1485, 1498, 12], [1501, 1511, 8], [1514, 1522, 4], [1522, 1538, 1, 'v']];

function voxRegions() {
    return vox.map(function (v) {
        var w = v[1] - v[0], a = v[2];
        var env = [[0, a * .7], [w * .3, a * .3], [w * .45, a * 1.2], [w * .8, a], [w, a * .7]];
        if (w > 30) env = [[0, a * .7], [w * .2, a * .6], [w * .3, 1], [w * .4, a * 1.2], [w * .6, a], [w * .65, 1], [w * .75, a * 1.1], [w, a * .7]];
        return { x: v[0], end: v[1], name: v[3], kind: 'audio', env: env };
    });
}

var drums = [
    midi(65, 73, 'Bridge', 'drumBridge'), midi(73, 89, 'Chorus', 'drumChorus'), midi(89, 1126, 'Bridge', 'drumBridge2'),
    midi(97, 113, 'Chorus', 'drumChorus'), midi(113, 129, 'Chorus', 'drumChorus')
];

var tracks = [
    {
        num: 1, name: 'Acoustic gtr', color: 'blue', icon: 'audioDark', vol: 72, pan: -1, selected: true,
        regions: [{ x: bar(25), end: 1568, name: 'Untitled 2_3#01', loop: true, again: bar(113) - bar(25), kind: 'audio', spiky: true, env: [[30, 0], [31, 2], [84, 4], [92, 10], [100, 13], [150, 14], [210, 17], [250, 12], [290, 20], [340, 13], [390, 13], [470, 12], [480, 20], [560, 24], [640, 24], [720, 18], [770, 20], [830, 26], [880, 26], [950, 16], [1000, 26], [1060, 20], [1120, 24], [1200, 24], [1220, 20], [1236, 10], [1250, 3], [1256, 0]] }]
    },
    {
        num: 2, name: 'Gtr 1', color: 'purple', icon: 'amp', vol: 68, pan: 1,
        regions: [{ x: bar(65), end: 1559, name: 'Gtr 1#01', loop: true, kind: 'audio', spiky: true, env: [[66, 0], [76, 2], [82, 24], [130, 20], [190, 16], [260, 19], [330, 20], [365, 26], [372, 12], [430, 13], [500, 10], [560, 17], [600, 15], [680, 14], [735, 24], [740, 4], [744, 0]] }]
    },
    {
        num: 3, name: 'Gtr 2', color: 'purple', icon: 'stackAmp', vol: 86, pan: 0,
        regions: [
            { x: 1120, end: 1248, name: 'Gtr 2: Comp A', loop: true, kind: 'audio', env: [[6, 0], [10, 20], [20, 20], [27, 9], [30, 24], [50, 18], [80, 17], [86, 34], [92, 24], [105, 14], [128, 15]] },
            { x: 1248, end: 1271, name: 'Gtr', kind: 'audio', env: [[0, 10], [4, 8], [8, 18], [23, 16]] },
            { x: 1271, end: 1330, name: 'Gtr 2: Co', kind: 'audio', env: [[0, 18], [20, 20], [28, 8], [34, 20], [40, 12], [48, 14], [52, 0]] }
        ]
    },
    { num: 4, name: 'vox', color: 'blue', icon: 'audio', vol: 100, pan: 0, star: true, regions: voxRegions() },
    {
        num: 5, name: 'Chorus bv', color: 'blue', icon: 'audio', vol: 58, pan: 0, checked: true,
        regions: [{ x: 851, end: 1051, name: 'vox#01', loop: true, kind: 'bumps', list: bv }, { x: 1319, end: 1519, name: 'vox#01.1', loop: true, kind: 'bumps', list: bv }]
    },
    {
        num: 6, name: 'Backing Vox', color: 'green', icon: 'stack', vol: 44, pan: 0,
        regions: [
            { x: 746, end: 792, name: '*Backi', kind: 'takes', takes: [44, 44, 46, 46, 43] },
            { x: 792, end: 844, name: '*Backin', kind: 'takes', takes: [45, 45, 51, 47, 44] },
            { x: 1026, end: 1073, name: '*Backin', kind: 'takes', takes: [44, 45, 46, 46, 44] },
            { x: 1073, end: 1125, name: '*Backin', kind: 'takes', takes: [44, 45, 51, 46, 43] },
            { x: 1401, end: 1447, name: '*Backi', kind: 'takes', takes: [46, 46, 46, 46, 46] },
            { x: 1447, end: 1546, name: '*Backing Vox', kind: 'takes', takes: [91, 92, 98, 93, 90], cuts: [45, 46, 51, 46, 44] }
        ]
    },
    {
        num: 12, name: 'auto bass', color: 'yellow', icon: 'bass', vol: 62, pan: 0,
        regions: [midi(49, 65, 'Bridge', 'bassLong'), midi(65, 73, 'Bridge', 'bassBridge'), midi(73, 89, 'Chorus', 'bassChorus'), midi(89, 1126, 'Bridge', 'bassBridge2'), midi(97, 113, 'Chorus', 'bassChorus'), midi(113, 129, 'Chorus', 'bassChorus')]
    },
    {
        num: 13, name: 'Vintage Upright', color: 'yellow', icon: 'piano', vol: 68, pan: 0,
        regions: [
            midi(1, 9, 'Keyboard Player', 'keyA'), midi(9, 17, 'Keyboard Player', 'keyA'), midi(17, 25, 'Keyboard Player', 'keyB'), midi(25, 33, 'Bridge', 'keyBridge'),
            midi(33, 41, 'Chorus', 'chorusA'), midi(41, 49, 'Chorus', 'chorusB'), midi(49, 57, 'Keyboard Player', 'keyA'), midi(57, 65, 'Keyboard Player', 'keyB'),
            midi(65, 73, 'Bridge', 'keyBridge'), midi(73, 81, 'Chorus', 'chorusA'), midi(81, 89, 'Chorus', 'chorusB'), midi(89, 1126, 'Bridge', 'keyBridge'),
            midi(97, 105, 'Chorus', 'chorusA'), midi(105, 113, 'Chorus', 'chorusB'), midi(113, 121, 'Chorus', 'chorusA'), midi(121, 129, 'Chorus', 'chorusB')
        ]
    },
    { num: 14, name: 'SoCal', color: 'yellow', icon: 'drums', vol: 68, pan: 0, regions: drums },
    { num: 15, name: 'Slate', color: 'purple', icon: 'slate', vol: 66, pan: 0, regions: drums }
];

function waveIcon(bg, fg) {
    return '<svg width="30" height="22" viewBox="0 0 30 22"><rect width="30" height="22" rx="2" fill="' + bg + '"/><path d="M8.500 10v3M10.500 8v6M12.500 6v11M14.500 4v14M16.500 7v9M18.500 5v12M20.500 8v6" stroke="' + fg + '"/></svg>';
}

var icons = {
    audio: waveIcon('#5aa5ff', '#31568a'),
    audioDark: waveIcon('#2f6db2', '#6f7f93'),
    amp: '<svg width="30" height="26" viewBox="0 0 30 26"><path d="M11 4c1-3 7-3 8 0" fill="none" stroke="#8d8cf0" stroke-width="1.500"/><rect x="4" y="4" width="22" height="20" rx="2" fill="#8d8cf0"/><path d="M7 7h16" stroke="#4b4b62" stroke-dasharray="1 2"/><rect x="6" y="10" width="18" height="11" fill="#575765"/><path d="M6 11.500h18M6 15.500h18M6 19.500h18" stroke="#8d8cf0" stroke-dasharray="2 1"/><path d="M6 13.500h18M6 17.500h18" stroke="#8d8cf0" stroke-dasharray="1 2"/></svg>',
    stackAmp: '<svg width="30" height="28" viewBox="0 0 30 28" fill="none" stroke="#7d81dc"><rect x="7.500" y="1.500" width="15" height="7"/><path d="M9 3.500h12M10 6.500h10" /><rect x="6.500" y="9.500" width="17" height="17" stroke-width="1.500"/><circle cx="11" cy="14" r="2.500"/><circle cx="19" cy="14" r="2.500"/><circle cx="11" cy="21" r="2.500"/><circle cx="19" cy="21" r="2.500"/></svg>',
    stack: '<svg width="8" height="12" viewBox="0 0 8 12"><path d="M1 1l5 5-5 5" fill="none" stroke="#eee" stroke-width="1.500"/></svg><svg width="30" height="22" viewBox="0 0 30 22"><rect x="2" width="27" height="22" rx="2" fill="#22b83a"/><circle cx="15" cy="11" r="7.500" fill="#5e675f"/><path d="M15 11V6" stroke="#22b83a" stroke-width="2"/></svg>',
    bass: '<svg width="30" height="30" viewBox="0 0 30 30"><path d="M11 19 25 5" stroke="#cca413" stroke-width="2.500"/><path d="M24 4l3-3 3 1-1 3-3 2z" fill="#cca413"/><path d="M1 22c0-3 4-3 6-4s3-4 5-5c0 2-1 3 0 5s3 1 4 0c0 3-4 4-5 6s-1 5-4 6c-3 0-6-4-6-8z" fill="#cca413"/><path d="M5 22l4 4" stroke="#575757"/></svg>',
    piano: '<svg width="30" height="24" viewBox="0 0 30 24"><path d="M0 1h30v2H0zM1 4h28v4H1zM0 9h30v3H0zM2 12h3v9H2zM25 12h3v9h-3zM0 22h30v1H0zM12 20h6v2h-6z" fill="#cca413"/><path d="M.5 3v19M29.500 3v19" stroke="#cca413"/></svg>',
    drums: '<svg width="30" height="28" viewBox="0 0 30 28" fill="none" stroke="#cca413"><path d="M1 3 15 1M6 2v8M20 6l9 1M25 7v16" stroke-width="1.500"/><rect x="8" y="6" width="8" height="5" fill="#cca413"/><rect x="17" y="6" width="7" height="5" fill="#cca413"/><rect x="1" y="11" width="6" height="8" fill="#cca413"/><rect x="22" y="13" width="7" height="5" fill="#cca413"/><circle cx="15" cy="20" r="7" fill="#575757" stroke-width="1.500"/><path d="M4 19v5l-3 3M4 24l4 3M25 22l-3 5M25 22l4 5"/></svg>',
    slate: '<svg width="30" height="24" viewBox="0 0 30 24"><ellipse cx="15" cy="15" rx="12" ry="7" fill="#4c4c4c"/><path d="M3 4l6 2M27 4l-5 2" stroke="#777"/><circle cx="8" cy="9" r="3" fill="#9c9c9c"/><circle cx="18" cy="7" r="3" fill="#808080"/><circle cx="23" cy="7" r="2" fill="#707070"/><circle cx="14" cy="16" r="4" fill="#eceaea"/></svg>'
};

function knob(pan, sel) {
    var mark = '<path d="M13 2v3" stroke="#59c36a"/>';
    if (pan < 0) mark = '<path d="M7 4.500A11 11 0 0 1 13 2" stroke="#55d169" stroke-width="4" fill="none"/>';
    if (pan > 0) mark = '<path d="M13 2a11 11 0 0 1 6 2.500" stroke="#55d169" stroke-width="4" fill="none"/>';
    return '<svg width="26" height="26" viewBox="0 0 26 26"><path d="M6 22A11 11 0 1 1 20 22" fill="none" stroke="#363636" stroke-width="3"/><circle cx="13" cy="13" r="9" fill="' + (sel ? '#a8a8a8' : '#858585') + '"/>' + mark + '<path d="M' + (13 + pan * 4) + ' ' + (pan ? 7 : 5) + 'v3" stroke="#111"/></svg>';
}

function header(t) {
    var check = '<input type="checkbox" aria-label="Select ' + t.name + '">';
    if (t.checked) check = '<label><input type="checkbox" checked aria-label="Select ' + t.name + '"><svg width="12" height="12" viewBox="0 0 12 12"><path d="M2 6l3 4 5-8" fill="none" stroke="#fff" stroke-width="1.500"/></svg></label>';
    if (t.star) check = '<svg width="12" height="12" viewBox="0 0 12 12"><path d="M6 0l2 4 4 .5-3 3 1 4.500-4-2.500L2 12l1-4.500-3-3L4 4z" fill="#cca413"/></svg>';
    return '<div class="track' + (t.selected ? ' selected' : '') + '">' +
        '<div class="track-num ' + t.color + '">' + t.num + '</div>' +
        '<div class="track-check">' + check + '</div>' +
        '<div class="track-icon' + (t.icon === 'stack' ? ' stack' : '') + '">' + icons[t.icon] + '</div>' +
        '<div class="track-main"><div class="track-name">' + t.name + '</div>' +
        '<div class="track-controls">' +
        '<div class="pair"><button>M</button><button>S</button></div>' +
        '<div class="pair"><button class="rec">R</button><button>I</button></div>' +
        '<input class="vol" type="range" min="0" max="100" value="' + t.vol + '" aria-label="' + t.name + ' volume">' +
        knob(t.pan, t.selected) + '</div></div></div>';
}

function region(r) {
    var w = r.end - r.x + 1;
    var html = '<div class="region' + (w < 13 ? ' thin' : '') + '" style="left:' + r.x + 'px;width:' + w + 'px">';
    html += '<svg width="' + w + '" height="77" shape-rendering="' + (r.kind === 'audio' || r.kind === 'bumps' ? 'crispEdges' : 'auto') + '">' + draw[r.kind](w, r) + '</svg>';
    var circle = r.loop ? '<i></i>' : '';
    if (r.name) html += '<div class="region-name">' + r.name + circle + '</div>';
    if (r.again) html += '<div class="region-name" style="left:' + r.again + 'px">' + r.name + circle + '</div>';
    if (r.kind === 'drumChorus') html += '<span class="region-chord" style="left:25px">G</span><span class="region-chord" style="left:118px">G</span>';
    return html + '</div>';
}

function grid(w, h) {
    var d = '';
    for (var b = 1; bar(b) < w; b++) d += 'M' + (bar(b) + .5) + ' 0V' + h;
    return '<svg class="grid" width="' + w + '" height="' + h + '"><path d="' + d + '" stroke="#4b4b4b"/></svg>';
}

/* ---------- ruler ---------- */

// chords in each eight bar cell: [dim, middle, last, extra ticks]
var cells = [['', 'G', 'G'], ['G', 'G', 'G'], ['G', 'G', 'G'], ['G', 'D', 'A'], ['', 'G', ''], ['C', 'G', '', 1], ['C', 'G', 'G'], ['G', 'G', 'G'], ['G', 'D', 'A'], ['', 'G', ''], ['C', 'G', '', 1], ['C', 'D', 'A'], ['', 'G', ''], ['C', 'G', '', 1], ['C', 'G', ''], ['C', 'G', '', 1]];

function ruler(w) {
    var shapes = '<path d="M0 2l7 6-7 7z" fill="#777"/><path d="M' + (w - 15) + ' 8l7-6v13z" fill="#777"/>';
    var text = '';
    for (var i = 0; i <= cells.length; i++) {
        var b = 1 + i * 8, x = bar(b), c = cells[i] || ['C', '', ''];
        shapes += '<path d="M' + (x + .5) + ' 2V19" stroke="#777"/>';
        if (cells[i]) shapes += '<rect x="' + (x + .5) + '" y="19.500" width="' + (bar(b + 8) - x) + '" height="17" rx="2" fill="#4a4a4a" stroke="#000"/>';
        text += '<span style="left:' + (x + 4) + 'px">' + b + '</span>';
        for (var k = 1; k < 8; k++) {
            if (bar(b + k) > w - 15) break;
            if (k === 7 && c[2]) continue;
            if (k === 1 && c[0]) continue;
            shapes += '<path d="M' + (bar(b + k) + .5) + ' 22V34" stroke="#8d8d8d"/>';
        }
        if (c[3]) shapes += '<path d="M' + (x + 76.5) + ' 22V34" stroke="#8d8d8d"/>';
        if (c[0]) text += '<span class="chord dim" style="left:' + (x + 2) + 'px">' + c[0] + '</span>';
        if (c[1]) text += '<span class="chord" style="left:' + (x + 26) + 'px">' + c[1] + '</span>';
        if (c[2]) text += '<span class="chord" style="left:' + (x + 73) + 'px">' + c[2] + '</span>';
    }
    return '<svg width="' + w + '" height="37">' + shapes + '</svg>' + text;
}

var width = document.querySelector('.timeline').clientWidth;

document.getElementById('tracks').innerHTML = tracks.map(header).join('');
document.getElementById('ruler').innerHTML = ruler(width);

var lanes = tracks.map(function (t) {
    return '<div class="lane' + (t.selected ? ' selected' : '') + '">' + (t.selected ? grid(width, LANE_H) : '') + t.regions.map(region).join('') + '</div>';
}).join('');
document.getElementById('lanes').innerHTML = grid(width, LANE_H * tracks.length) + lanes;
```
